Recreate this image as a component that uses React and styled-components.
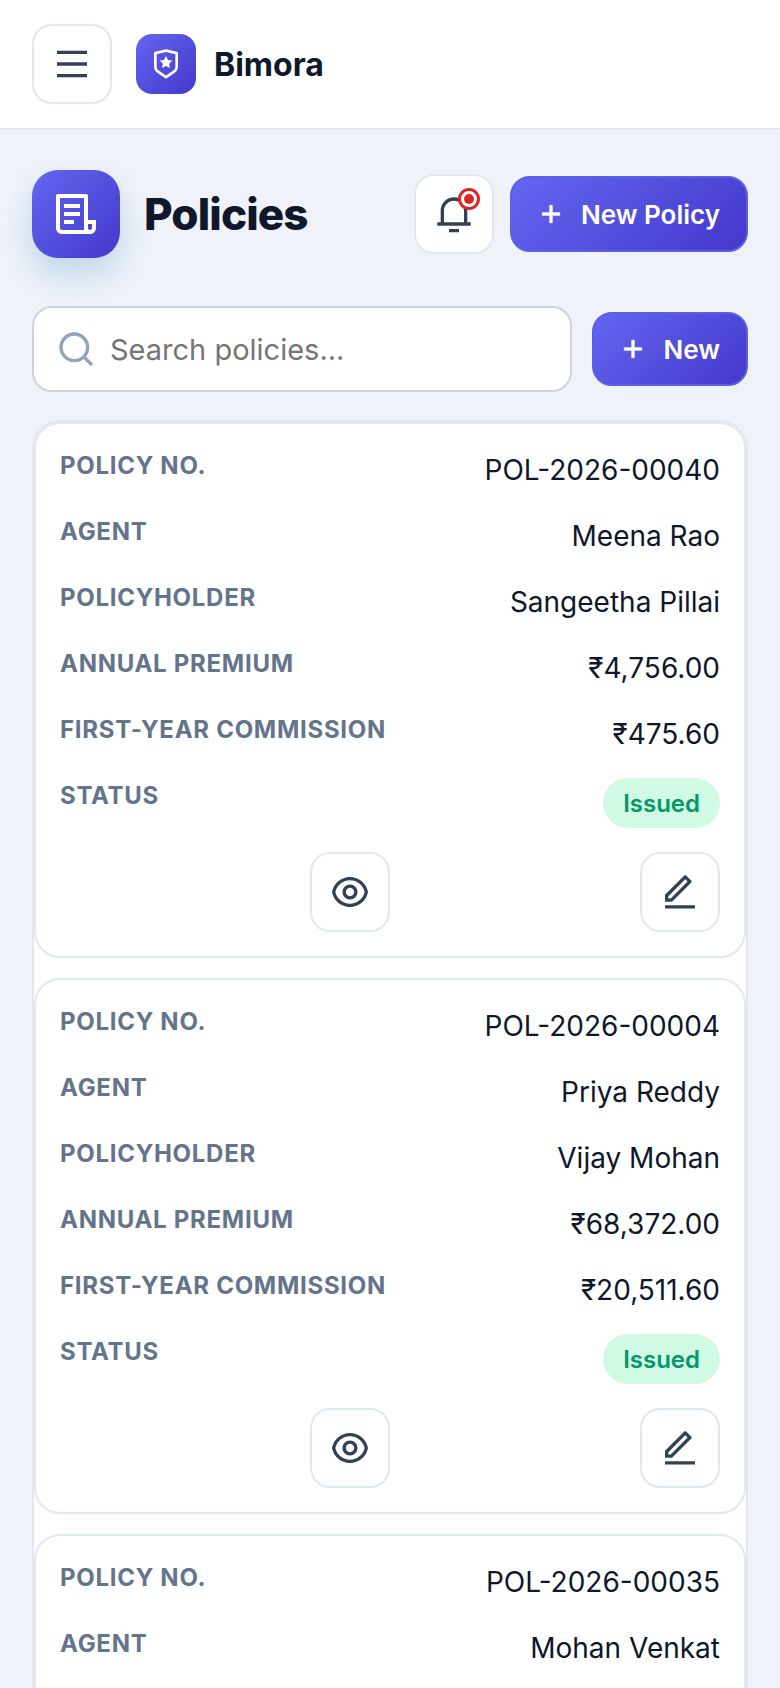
import React from 'react';
import styled, { createGlobalStyle } from 'styled-components';
import {
  RiMenuLine,
  RiShieldStarLine,
  RiFileList3Line,
  RiNotification3Line,
  RiAddLine,
  RiSearchLine,
  RiEyeLine,
  RiEditLine,
} from 'react-icons/ri';

const GlobalStyle = createGlobalStyle`
  html, body {
    margin: 0;
    padding: 0;
    background: #eff3f9;
    font-family: Inter, "Liberation Sans", sans-serif;
    color: #0f172a;
  }
  * { box-sizing: border-box; }
`;

const brand = 'linear-gradient(135deg, #6366f1, #4338ca)';

const Page = styled.div`
  height: 1688px;
  overflow: hidden;
`;

const Header = styled.header`
  display: flex;
  align-items: center;
  gap: 24px;
  height: 130px;
  padding: 0 32px;
  background: #fff;
  border-bottom: 2px solid #e2e8f0;
`;

const IconButton = styled.button`
  position: relative;
  display: flex;
  align-items: center;
  justify-content: center;
  width: 80px;
  height: 80px;
  padding: 0;
  background: #fff;
  border: 2px solid #e2e8f0;
  border-radius: 20px;
  color: #334155;
  font-size: 40px;
`;

const Logo = styled.div`
  display: flex;
  align-items: center;
  justify-content: center;
  width: 60px;
  height: 60px;
  border-radius: 16px;
  background: ${brand};
  color: #fff;
  font-size: 32px;
`;

const BrandName = styled.span`
  margin-left: -6px;
  font-size: 32px;
  font-weight: 700;
`;

const Main = styled.main`
  padding: 40px 32px 0;
`;

const PageHead = styled.div`
  display: flex;
  align-items: center;
  height: 88px;
  margin-bottom: 48px;
`;

const PageIcon = styled.div`
  display: flex;
  align-items: center;
  justify-content: center;
  width: 88px;
  height: 88px;
  margin-right: 24px;
  border-radius: 26px;
  background: ${brand};
  color: #fff;
  font-size: 48px;
  box-shadow: 0 16px 32px rgba(14, 116, 184, 0.22);
`;

const Title = styled.h1`
  flex: 1;
  margin: 0;
  font-size: 44px;
  font-weight: 800;
  letter-spacing: -0.88px;
`;

const NotifyDot = styled.span`
  position: absolute;
  top: 12px;
  right: 12px;
  width: 22px;
  height: 22px;
  border: 3px solid #dc2626;
  border-radius: 50%;
  background: #fff;

  &::after {
    content: '';
    position: absolute;
    inset: 3px;
    border-radius: 50%;
    background: #dc2626;
  }
`;

const PrimaryButton = styled.button`
  display: flex;
  align-items: center;
  justify-content: center;
  gap: 15px;
  height: ${(props) => props.$height}px;
  margin-left: ${(props) => props.$offset}px;
  padding: 0 26px 0 24px;
  background: ${brand};
  border: 2px solid #5b5fe6;
  border-radius: 20px;
  color: #fff;
  font-family: inherit;
  font-size: 26px;
  font-weight: 600;
  white-space: nowrap;

  svg {
    font-size: 30px;
    flex-shrink: 0;
    stroke: currentColor;
    stroke-width: 0.6;
  }
`;

const Toolbar = styled.div`
  display: flex;
  align-items: center;
  margin-bottom: 28px;
`;

const SearchBox = styled.label`
  flex: 1;
  min-width: 0;
  display: flex;
  align-items: center;
  gap: 14px;
  height: 86px;
  padding: 0 22px;
  background: #fff;
  border: 2px solid #cbd5e1;
  border-radius: 20px;
  color: #94a3b8;
  font-size: 40px;
`;

const SearchInput = styled.input`
  flex: 1;
  min-width: 0;
  border: 0;
  outline: 0;
  padding: 0;
  background: transparent;
  font-family: inherit;
  font-size: 29px;
  color: #0f172a;

  &::placeholder {
    color: #757575;
    opacity: 1;
  }
`;

const List = styled.div`
  display: flex;
  flex-direction: column;
  gap: 20px;
  background: #fff;
  border: 2px solid #e2e8f0;
  border-radius: 28px;
`;

const Card = styled.article`
  padding: 24px;
  background: #fff;
  border: 2px solid #e2e8f0;
  border-radius: 26px;
`;

const Rows = styled.dl`
  display: flex;
  flex-direction: column;
  gap: 22px;
  margin: 0 0 24px;
`;

const Row = styled.div`
  display: flex;
  justify-content: space-between;
  align-items: flex-start;
`;

const Label = styled.dt`
  font-size: 24px;
  line-height: 36px;
  font-weight: 700;
  letter-spacing: 0.72px;
  color: #64748b;
  text-transform: uppercase;
`;

const Value = styled.dd`
  margin: 0;
  font-size: 28px;
  line-height: 44px;
  text-align: right;
`;

const Badge = styled.span`
  display: block;
  height: 50px;
  padding: 0 20px;
  border-radius: 25px;
  background: #d1fae5;
  color: #059669;
  font-size: 24px;
  font-weight: 600;
  line-height: 52px;
`;

const Actions = styled.div`
  display: grid;
  grid-template-columns: 1fr 1fr;
  justify-items: end;
`;

// the third card runs off the bottom of the page, only its first rows show
const policies = [
  {
    no: 'POL-2026-00040',
    rows: [
      ['Policy No.', 'POL-2026-00040'],
      ['Agent', 'Meena Rao'],
      ['Policyholder', 'Sangeetha Pillai'],
      ['Annual Premium', '₹4,756.00'],
      ['First-Year Commission', '₹475.60'],
    ],
    status: 'Issued',
  },
  {
    no: 'POL-2026-00004',
    rows: [
      ['Policy No.', 'POL-2026-00004'],
      ['Agent', 'Priya Reddy'],
      ['Policyholder', 'Vijay Mohan'],
      ['Annual Premium', '₹68,372.00'],
      ['First-Year Commission', '₹20,511.60'],
    ],
    status: 'Issued',
  },
  {
    no: 'POL-2026-00035',
    rows: [
      ['Policy No.', 'POL-2026-00035'],
      ['Agent', 'Mohan Venkat'],
    ],
  },
];

function PolicyCard({ policy }) {
  return (
    <Card>
      <Rows>
        {policy.rows.map(([label, value]) => (
          <Row key={label}>
            <Label>{label}</Label>
            <Value>{value}</Value>
          </Row>
        ))}
        {policy.status && (
          <Row>
            <Label>Status</Label>
            <Value><Badge>{policy.status}</Badge></Value>
          </Row>
        )}
      </Rows>
      <Actions>
        <IconButton aria-label="View"><RiEyeLine /></IconButton>
        <IconButton aria-label="Edit"><RiEditLine /></IconButton>
      </Actions>
    </Card>
  );
}

export default function App() {
  return (
    <Page>
      <GlobalStyle />
      <Header>
        <IconButton aria-label="Menu"><RiMenuLine /></IconButton>
        <Logo><RiShieldStarLine /></Logo>
        <BrandName>Bimora</BrandName>
      </Header>
      <Main>
        <PageHead>
          <PageIcon><RiFileList3Line /></PageIcon>
          <Title>Policies</Title>
          <IconButton aria-label="Notifications">
            <RiNotification3Line />
            <NotifyDot />
          </IconButton>
          <PrimaryButton $height={76} $offset={16}><RiAddLine />New Policy</PrimaryButton>
        </PageHead>
        <Toolbar>
          <SearchBox>
            <RiSearchLine />
            <SearchInput placeholder="Search policies..." />
          </SearchBox>
          <PrimaryButton $height={74} $offset={20}><RiAddLine />New</PrimaryButton>
        </Toolbar>
        <List>
          {policies.map((policy) => (
            <PolicyCard key={policy.no} policy={policy} />
          ))}
        </List>
      </Main>
    </Page>
  );
}
